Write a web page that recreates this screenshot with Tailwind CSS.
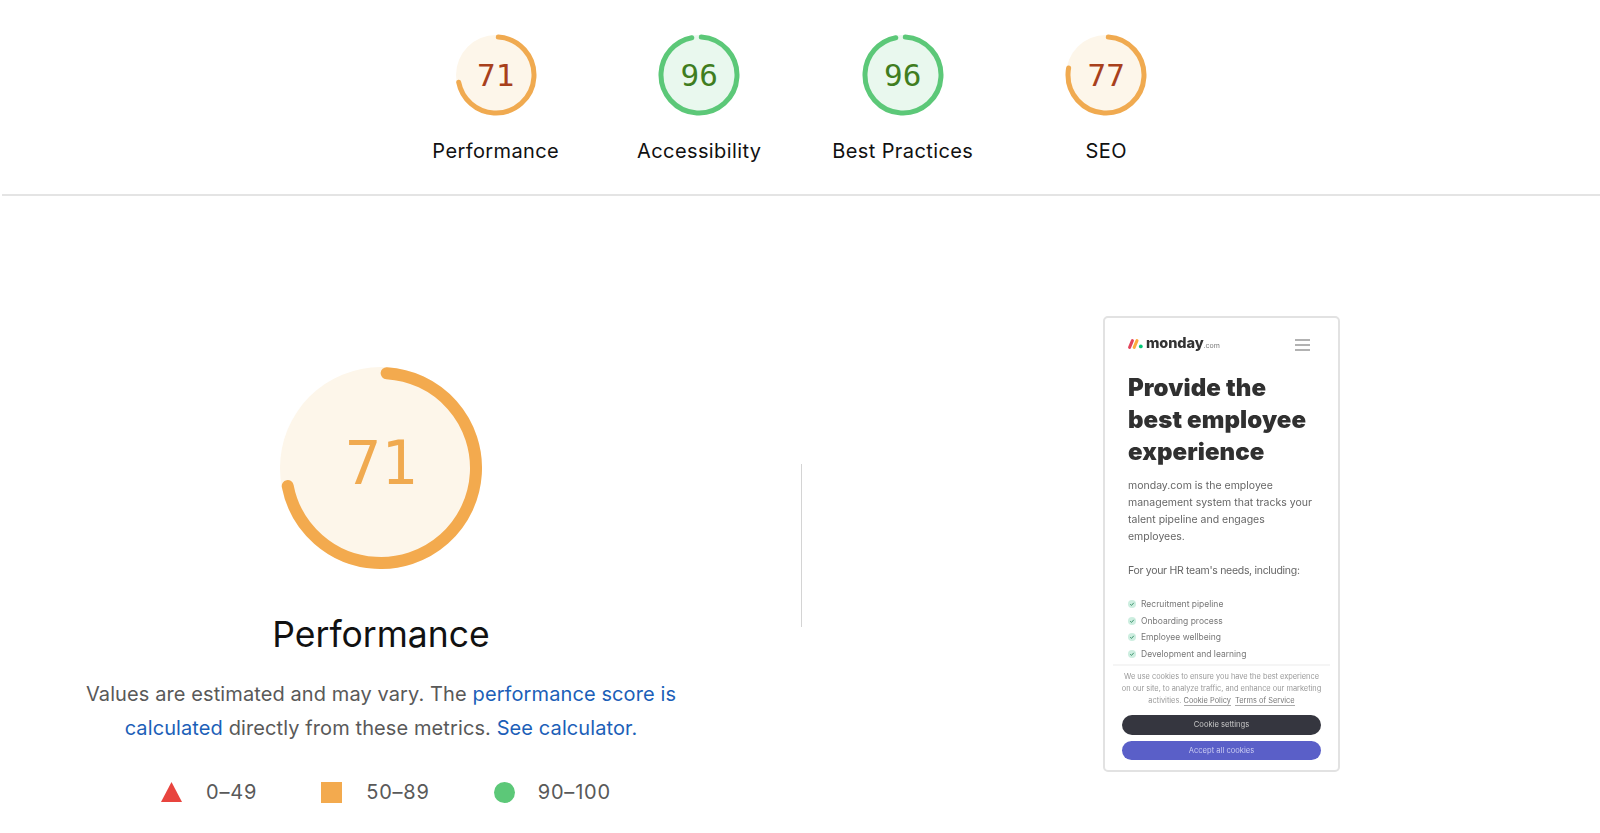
<!DOCTYPE html>
<html lang="en">
<head>
  <meta charset="UTF-8" />
  <meta name="viewport" content="width=device-width, initial-scale=1.0" />
  <title>Lighthouse report</title>
  <script src="https://cdn.jsdelivr.net/npm/@tailwindcss/browser@4"></script>
</head>
<body class="bg-white h-[833px] overflow-hidden font-['Inter',sans-serif]">

  <!-- Score row -->
  <div class="ml-[2px] h-[196px] border-b-2 border-[#e4e4e4] flex justify-center pt-[34px]">
    <div class="w-[203.5px] flex flex-col items-center">
      <div class="relative w-[82px] h-[82px]">
        <svg class="w-full h-full" viewBox="0 0 82 82">
          <circle cx="41" cy="41" r="40" fill="#fdf6ea" />
          <circle cx="41" cy="41" r="38" fill="none" stroke="#f0aa50" stroke-width="5" stroke-linecap="round" pathLength="100" stroke-dasharray="71 100" transform="rotate(-86.6 41 41)" />
        </svg>
        <span class="absolute inset-0 flex items-center justify-center font-['DejaVu_Sans_Mono',monospace] text-[31px] text-[#a8401c]">71</span>
      </div>
      <p class="mt-[21px] text-[20px] leading-[28px] tracking-[0.4px] text-[#111]">Performance</p>
    </div>
    <div class="w-[203.5px] flex flex-col items-center">
      <div class="relative w-[82px] h-[82px]">
        <svg class="w-full h-full" viewBox="0 0 82 82">
          <circle cx="41" cy="41" r="40" fill="#e9f8ee" />
          <circle cx="41" cy="41" r="38" fill="none" stroke="#5cc878" stroke-width="5" stroke-linecap="round" pathLength="100" stroke-dasharray="96 100" transform="rotate(-86.6 41 41)" />
        </svg>
        <span class="absolute inset-0 flex items-center justify-center font-['DejaVu_Sans_Mono',monospace] text-[31px] text-[#3f7d20]">96</span>
      </div>
      <p class="mt-[21px] text-[20px] leading-[28px] tracking-[0.4px] text-[#111]">Accessibility</p>
    </div>
    <div class="w-[203.5px] flex flex-col items-center">
      <div class="relative w-[82px] h-[82px]">
        <svg class="w-full h-full" viewBox="0 0 82 82">
          <circle cx="41" cy="41" r="40" fill="#e9f8ee" />
          <circle cx="41" cy="41" r="38" fill="none" stroke="#5cc878" stroke-width="5" stroke-linecap="round" pathLength="100" stroke-dasharray="96 100" transform="rotate(-86.6 41 41)" />
        </svg>
        <span class="absolute inset-0 flex items-center justify-center font-['DejaVu_Sans_Mono',monospace] text-[31px] text-[#3f7d20]">96</span>
      </div>
      <p class="mt-[21px] text-[20px] leading-[28px] tracking-[0.4px] text-[#111]">Best Practices</p>
    </div>
    <div class="w-[203.5px] flex flex-col items-center">
      <div class="relative w-[82px] h-[82px]">
        <svg class="w-full h-full" viewBox="0 0 82 82">
          <circle cx="41" cy="41" r="40" fill="#fdf6ea" />
          <circle cx="41" cy="41" r="38" fill="none" stroke="#f0aa50" stroke-width="5" stroke-linecap="round" pathLength="100" stroke-dasharray="77 100" transform="rotate(-86.6 41 41)" />
        </svg>
        <span class="absolute inset-0 flex items-center justify-center font-['DejaVu_Sans_Mono',monospace] text-[31px] text-[#a8401c]">77</span>
      </div>
      <p class="mt-[21px] text-[20px] leading-[28px] tracking-[0.4px] text-[#111]">SEO</p>
    </div>
  </div>

  <!-- Detail -->
  <div class="flex items-start">
    <!-- Left column -->
    <div class="w-[762px] flex flex-col items-center pt-[171px]">
      <div class="relative w-[202px] h-[202px]">
        <svg class="w-full h-full" viewBox="0 0 202 202">
          <circle cx="101" cy="101" r="101" fill="#fdf6ea" />
          <circle cx="101" cy="101" r="95" fill="none" stroke="#f3aa4e" stroke-width="12" stroke-linecap="round" pathLength="100" stroke-dasharray="71 100" transform="rotate(-86.6 101 101)" />
        </svg>
        <span class="absolute inset-0 pb-[10px] flex items-center justify-center font-['DejaVu_Sans_Mono',monospace] text-[60px] text-[#f0aa50]">71</span>
      </div>
      <h2 class="mt-[44px] text-[35.5px] leading-[44px] text-[#111]">Performance</h2>
      <div class="mt-[20px] text-center text-[20px] leading-[34px] tracking-[0.1px] text-[#595959]">
        <p>Values are estimated and may vary. The <a class="text-[#1c5fb8]">performance score is</a></p>
        <p><a class="text-[#1c5fb8]">calculated</a> directly from these metrics. <a class="text-[#1c5fb8]">See calculator.</a></p>
      </div>
      <div class="mt-[35px] ml-[10px] flex items-center text-[20px] leading-[24px] tracking-[0.8px] text-[#595959]">
        <svg class="w-[21px] h-[20px]" viewBox="0 0 21 20"><polygon points="10.5,0 21,20 0,20" fill="#e8443e" /></svg>
        <span class="ml-[24px]">0–49</span>
        <span class="ml-[64px] w-[21px] h-[21px] bg-[#f3aa4e]"></span>
        <span class="ml-[24px]">50–89</span>
        <span class="ml-[64px] w-[21px] h-[21px] rounded-full bg-[#5cc878]"></span>
        <span class="ml-[23px]">90–100</span>
      </div>
    </div>

    <!-- Divider -->
    <div class="ml-[39px] mt-[268px] w-px h-[163px] bg-[#d4d4d4]"></div>

    <!-- Page preview -->
    <div class="ml-[301px] mt-[120px] w-[237px] h-[456px] border-2 border-[#e2e2e2] rounded-[5px] flex flex-col">
      <div class="blur-[0.5px] flex flex-col flex-1">
        <div class="flex items-center justify-between pl-[23px] pr-[28px] pt-[10px] h-[41px]">
          <div class="flex items-baseline">
            <svg class="w-[15px] h-[10px] self-center" viewBox="0 0 15 10">
              <path d="M1.6 8.4 L4.4 1.6" stroke="#e2445c" stroke-width="3" stroke-linecap="round" />
              <path d="M6.2 8.4 L9 1.6" stroke="#fdab3d" stroke-width="3" stroke-linecap="round" />
              <circle cx="12.8" cy="7.4" r="1.9" fill="#00c875" />
            </svg>
            <span class="ml-[3px] text-[14.5px] leading-[16px] font-extrabold text-[#333] tracking-[-0.1px]">monday</span>
            <span class="text-[7px] text-[#777]">.com</span>
          </div>
          <svg class="w-[15px] h-[12px] mt-[2px]" viewBox="0 0 15 12" stroke="#666" stroke-width="1.2">
            <path d="M0 1 H15 M0 6 H15 M0 11 H15" />
          </svg>
        </div>
        <h3 class="pl-[23px] mt-[13px] text-[24px] leading-[32px] font-black tracking-[0.1px] text-[#303030]">Provide the<br />best employee<br />experience</h3>
        <p class="pl-[23px] mt-[9px] text-[10.5px] leading-[17px] text-[#666]">monday.com is the employee<br />management system that tracks your<br />talent pipeline and engages<br />employees.</p>
        <p class="pl-[23px] mt-[17px] text-[10.5px] leading-[17px] tracking-[-0.3px] text-[#666]">For your HR team's needs, including:</p>
        <ul class="pl-[23px] mt-[17px] text-[8.5px] leading-[16.5px] text-[#777]">
          <li class="flex items-center gap-[5px]"><svg class="w-[8px] h-[8px]" viewBox="0 0 8 8"><circle cx="4" cy="4" r="4" fill="#cdeee0" /><path d="M2.2 4.2 L3.5 5.4 L5.8 2.8" fill="none" stroke="#2f8a63" stroke-width="0.9" /></svg>Recruitment pipeline</li>
          <li class="flex items-center gap-[5px]"><svg class="w-[8px] h-[8px]" viewBox="0 0 8 8"><circle cx="4" cy="4" r="4" fill="#cdeee0" /><path d="M2.2 4.2 L3.5 5.4 L5.8 2.8" fill="none" stroke="#2f8a63" stroke-width="0.9" /></svg>Onboarding process</li>
          <li class="flex items-center gap-[5px]"><svg class="w-[8px] h-[8px]" viewBox="0 0 8 8"><circle cx="4" cy="4" r="4" fill="#cdeee0" /><path d="M2.2 4.2 L3.5 5.4 L5.8 2.8" fill="none" stroke="#2f8a63" stroke-width="0.9" /></svg>Employee wellbeing</li>
          <li class="flex items-center gap-[5px]"><svg class="w-[8px] h-[8px]" viewBox="0 0 8 8"><circle cx="4" cy="4" r="4" fill="#cdeee0" /><path d="M2.2 4.2 L3.5 5.4 L5.8 2.8" fill="none" stroke="#2f8a63" stroke-width="0.9" /></svg>Development and learning</li>
        </ul>
        <div class="mx-[8px] mt-[2px] h-[2px] bg-[#f5f5f5]"></div>
        <p class="mt-[5px] text-center text-[7.4px] leading-[12px] text-[#999]">We use cookies to ensure you have the best experience<br />on our site, to analyze traffic, and enhance our marketing<br />activities. <span class="border-b border-[#aaa] text-[#777]">Cookie Policy</span> &nbsp;<span class="border-b border-[#aaa] text-[#777]">Terms of Service</span></p>
        <div class="mx-[17px] mt-[8px] h-[20px] rounded-full bg-[#35363f] flex items-center justify-center text-[7.6px] text-[#c8c8c8]">Cookie settings</div>
        <div class="mx-[17px] mt-[6px] h-[19px] rounded-full bg-[#5a5fc8] flex items-center justify-center text-[7.6px] text-[#c9cbf2]">Accept all cookies</div>
      </div>
    </div>
  </div>
</body>
</html>
